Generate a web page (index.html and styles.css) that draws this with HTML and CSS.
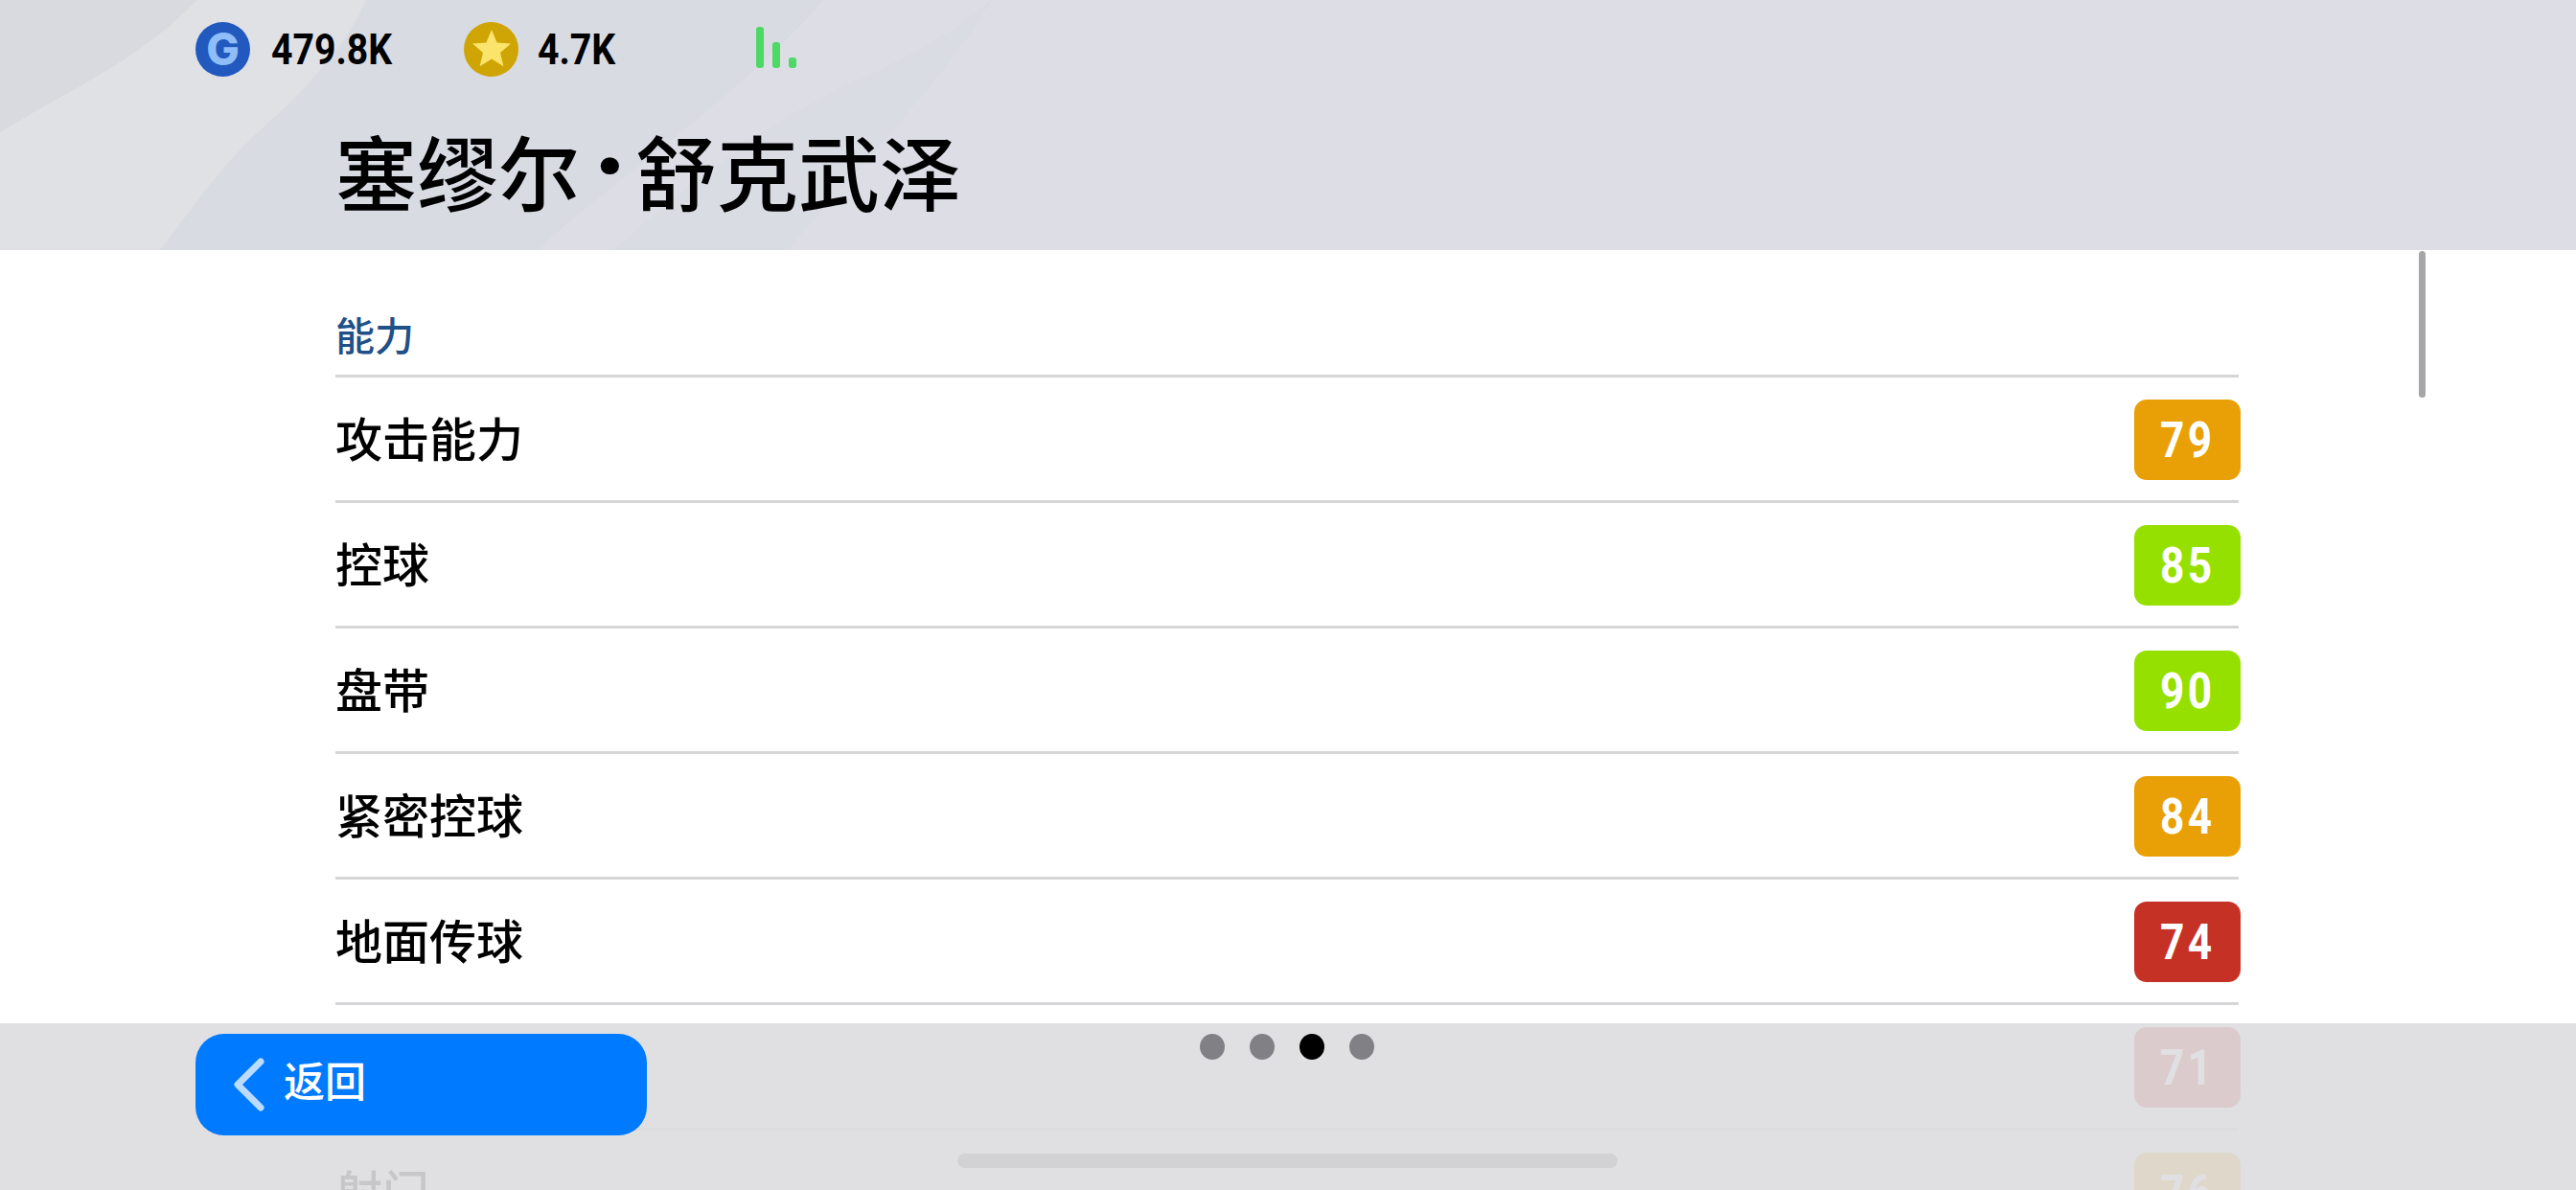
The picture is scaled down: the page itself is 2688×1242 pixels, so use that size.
FILE: index.html
```html
<!DOCTYPE html>
<html lang="zh-CN">
	<head>
		<meta charset="UTF-8" />
		<title>塞缪尔·舒克武泽</title>
		<link rel="stylesheet" href="styles.css">
	</head>
	<body>
		<div class="page">
			<div class="header">
				<svg class="header-bg" viewBox="0 0 2688 261" preserveAspectRatio="none">
					<rect width="2688" height="261" fill="#dcdde5" />
					<path d="M0 0 H382 C365 40 330 85 267 140 C225 180 195 225 167 261 H0 Z" fill="#dfe1e5" />
					<path d="M0 0 H205 C150 60 70 95 0 138 Z" fill="#d8dae0" />
					<path d="M382 0 C365 40 330 85 267 140 C225 180 195 225 167 261 H560 C650 180 760 110 860 0 Z" fill="#d9dbe3" />
					<path d="M1035 0 C980 90 900 170 822 261 H640 C720 190 800 130 880 90 C950 60 1000 30 1035 0 Z" fill="#dadce4" />
				</svg>
				<div class="topbar">
					<div class="wallet">
						<span class="coin coin-g">G</span>
						<span class="amount">479.8K</span>
					</div>
					<div class="wallet wallet-gold">
						<span class="coin coin-gold">
							<svg width="44" height="44" viewBox="0 0 44 44">
								<polygon points="22,2 27.6,15.5 42,16.6 31,26 34.4,40.2 22,32.6 9.6,40.2 13,26 2,16.6 16.4,15.5" fill="#fbe46c" />
							</svg>
						</span>
						<span class="amount">4.7K</span>
					</div>
					<div class="signal">
						<span class="bar bar-high"></span>
						<span class="bar bar-mid"></span>
						<span class="bar bar-low"></span>
					</div>
				</div>
				<h1 class="player-name">塞缪尔<span class="name-dot">·</span>舒克武泽</h1>
			</div>

			<div class="stats">
				<h2 class="section-title">能力</h2>
				<div class="stat-row">
					<span class="stat-label">攻击能力</span>
					<span class="badge badge-orange"><span class="badge-num">79</span></span>
				</div>
				<div class="stat-row">
					<span class="stat-label">控球</span>
					<span class="badge badge-green"><span class="badge-num">85</span></span>
				</div>
				<div class="stat-row">
					<span class="stat-label">盘带</span>
					<span class="badge badge-green"><span class="badge-num">90</span></span>
				</div>
				<div class="stat-row">
					<span class="stat-label">紧密控球</span>
					<span class="badge badge-orange"><span class="badge-num">84</span></span>
				</div>
				<div class="stat-row">
					<span class="stat-label">地面传球</span>
					<span class="badge badge-red"><span class="badge-num">74</span></span>
				</div>
				<div class="stat-row">
					<span class="stat-label"></span>
					<span class="badge badge-red"><span class="badge-num">71</span></span>
				</div>
				<div class="stat-row">
					<span class="stat-label">射门</span>
					<span class="badge badge-orange"><span class="badge-num">76</span></span>
				</div>
			</div>

			<div class="scrollbar"></div>

			<div class="footer">
				<div class="footer-row">
					<button class="btn-back">
						<svg width="33" height="56" viewBox="0 0 33 56">
							<path d="M29 4 L5 28 L29 52" fill="none" stroke="#bcdcff" stroke-width="7" stroke-linecap="round" stroke-linejoin="round" />
						</svg>
						<span class="btn-text">返回</span>
					</button>
					<div class="dots">
						<span class="dot"></span>
						<span class="dot"></span>
						<span class="dot dot-active"></span>
						<span class="dot"></span>
					</div>
				</div>
				<div class="home-bar"></div>
			</div>
		</div>
	</body>
</html>
```

FILE: styles.css
```css
body {
	margin: 0;
	font-family: 'Noto Sans CJK SC', 'Noto Sans', sans-serif;
	color: #000;
	background-color: #fff;
}

.page {
	position: relative;
	width: 2688px;
	height: 1242px;
	overflow: hidden;
}

.header {
	position: relative;
	height: 261px;
}

.header-bg {
	position: absolute;
	top: 0;
	left: 0;
	width: 100%;
	height: 100%;
}

.topbar {
	position: relative;
	display: flex;
	align-items: center;
	height: 58px;
	padding: 22px 0 0 204px;
}

.wallet {
	display: flex;
	align-items: center;
	gap: 22px;
	width: 280px;
}

.wallet-gold {
	gap: 20px;
	width: 305px;
}

.coin {
	display: flex;
	align-items: center;
	justify-content: center;
	width: 57px;
	height: 57px;
	border-radius: 50%;
	flex-shrink: 0;
}

.coin-g {
	background-color: #2259bf;
	color: #8fbdf9;
	font-family: 'Inter', sans-serif;
	font-size: 46px;
	font-weight: 800;
}

.coin-gold {
	background-color: #cfa506;
}

.amount {
	font-family: 'Roboto', sans-serif;
	font-size: 45px;
	font-weight: 700;
	transform: scaleX(0.87);
	transform-origin: left center;
}

.signal {
	display: flex;
	align-items: flex-end;
	gap: 9px;
	height: 43px;
	margin-top: -4px;
}

.bar {
	width: 8px;
	border-radius: 3px;
	background-color: #4cd964;
}

.bar-high {
	height: 43px;
}

.bar-mid {
	height: 27px;
}

.bar-low {
	height: 11px;
}

.player-name {
	position: relative;
	margin: 47px 0 0 350px;
	font-size: 85px;
	font-weight: 500;
	line-height: 100px;
}

.name-dot {
	display: inline-block;
	box-sizing: border-box;
	width: 58px;
	padding-left: 5px;
	text-align: center;
	font-family: 'Roboto', sans-serif;
	font-size: 120px;
	font-weight: 700;
	line-height: 0;
}

.stats {
	padding: 57px 352px 0 350px;
}

.section-title {
	margin: 0;
	padding-bottom: 13px;
	border-bottom: 3px solid #d6d6d8;
	color: #1f5088;
	font-size: 41px;
	font-weight: 500;
	line-height: 60px;
}

.stat-row {
	display: flex;
	align-items: center;
	justify-content: space-between;
	box-sizing: border-box;
	height: 131px;
	border-bottom: 3px solid #d6d6d8;
}

.stat-label {
	font-size: 49px;
	font-weight: 500;
	margin-bottom: 5px;
}

.badge {
	display: flex;
	align-items: center;
	justify-content: center;
	width: 111px;
	height: 84px;
	margin: 2px -2px 0 0;
	border-radius: 13px;
	color: #fff;
	font-family: 'Roboto', sans-serif;
	font-size: 52px;
	font-weight: 700;
}

.badge-num {
	letter-spacing: 4px;
	transform: scaleX(0.85);
}

.badge-orange {
	background-color: #e8a006;
}

.badge-green {
	background-color: #96e000;
}

.badge-red {
	background-color: #c63126;
}

.scrollbar {
	position: absolute;
	top: 262px;
	left: 2524px;
	width: 7px;
	height: 153px;
	border-radius: 4px;
	background-color: #a6a6a8;
}

.footer {
	position: absolute;
	left: 0;
	right: 0;
	bottom: 0;
	height: 174px;
	box-sizing: border-box;
	padding: 11px 0 0 204px;
	background-color: rgba(221, 221, 224, 0.9);
}

.footer-row {
	display: flex;
	align-items: flex-start;
}

.btn-back {
	display: flex;
	align-items: center;
	gap: 20px;
	width: 471px;
	height: 106px;
	padding: 0 0 0 39px;
	border: none;
	border-radius: 30px;
	background-color: #007aff;
	color: #fff;
	font-family: inherit;
	font-size: 43px;
	font-weight: 500;
}

.btn-text {
	line-height: 50px;
	margin-bottom: 12px;
}

.dots {
	display: flex;
	gap: 26px;
	margin-left: 577px;
}

.dot {
	width: 26px;
	height: 27px;
	border-radius: 50%;
	background-color: #808085;
}

.dot-active {
	background-color: #000;
}

.home-bar {
	width: 689px;
	height: 15px;
	margin: 19px 0 0 795px;
	border-radius: 8px;
	background-color: #d2d2d5;
}
```
